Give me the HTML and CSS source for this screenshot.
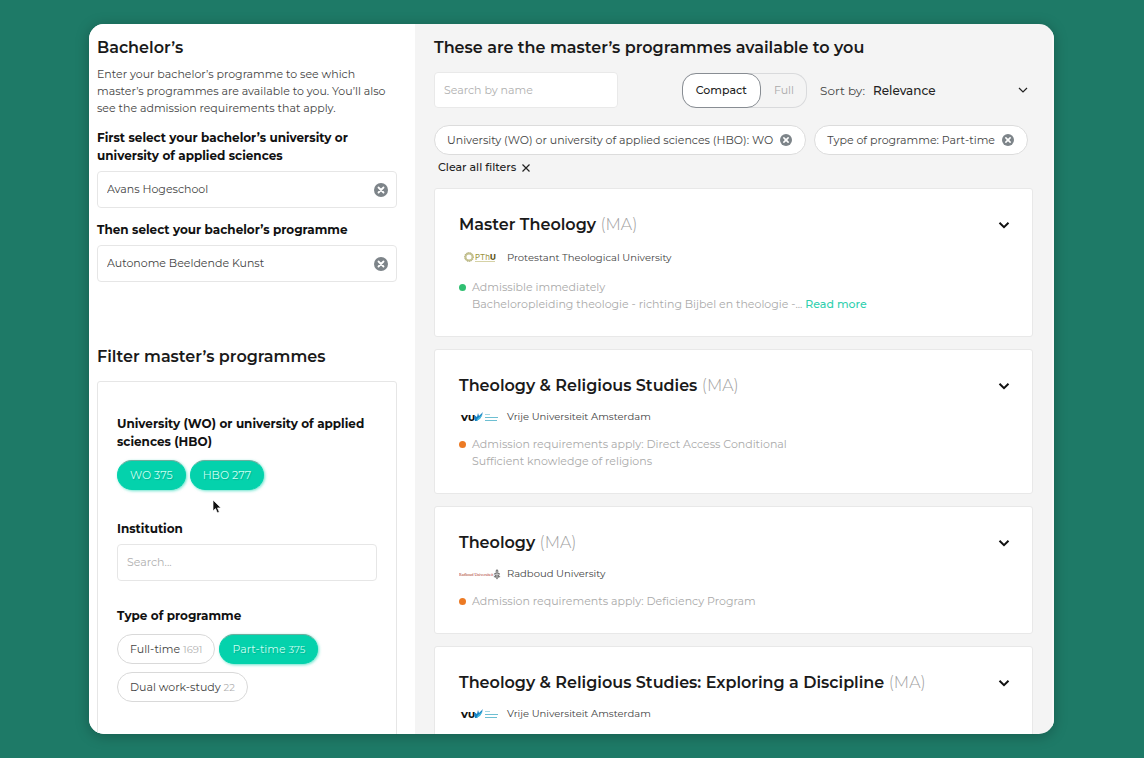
FILE: index.html
```html
<!DOCTYPE html>
<html lang="en">
<head>
    <meta charset="UTF-8">
    <meta name="viewport" content="width=device-width, initial-scale=1.0">
    <title>Master's programmes</title>
    <link rel="stylesheet" href="styles.css">
</head>
<body>
    <!-- Shared icons -->
    <svg class="sprite" width="0" height="0" aria-hidden="true">
        <symbol id="icon-clear" viewBox="0 0 14 14">
            <circle cx="7" cy="7" r="7" fill="#7d8489"/>
            <path d="M4.5 4.5l5 5M9.5 4.5l-5 5" stroke="#fff" stroke-width="1.8" stroke-linecap="round"/>
        </symbol>
        <symbol id="icon-chevron" viewBox="0 0 12 12">
            <path d="M1.5 3.8L6 8.2l4.5-4.4" fill="none" stroke="#111" stroke-width="2"/>
        </symbol>
        <symbol id="logo-vu" viewBox="0 0 42 16">
            <text x="2" y="12" font-family="Montserrat, Inter, sans-serif" font-size="9" font-weight="800" fill="#111">VU</text>
            <path d="M15 6l3 2 1-4 1 3 4-4-2 5-4 4h-2z" fill="#1781c2"/>
            <path d="M19 9l5-4-3 5-4 2z" fill="#41b6dc"/>
            <path d="M26 5.500h5" stroke="#a5d8e4"/>
            <path d="M26 8.500h13M26 11.500h12" stroke="#6dbfd2"/>
        </symbol>
    </svg>

    <div class="app">
        <aside class="sidebar">
            <h2>Bachelor’s</h2>
            <p class="intro">Enter your bachelor’s programme to see which master’s programmes are available to you. You’ll also see the admission requirements that apply.</p>

            <div class="field">
                <label for="university">First select your bachelor’s university or university of applied sciences</label>
                <div class="input-wrap">
                    <input type="text" id="university" value="Avans Hogeschool">
                    <button class="clear-btn" aria-label="Clear university"><svg width="14" height="14"><use href="#icon-clear"/></svg></button>
                </div>
            </div>
            <div class="field">
                <label for="programme">Then select your bachelor’s programme</label>
                <div class="input-wrap">
                    <input type="text" id="programme" value="Autonome Beeldende Kunst">
                    <button class="clear-btn" aria-label="Clear programme"><svg width="14" height="14"><use href="#icon-clear"/></svg></button>
                </div>
            </div>

            <h2 class="filter-title">Filter master’s programmes</h2>
            <div class="filters">
                <div class="filter-group">
                    <h3>University (WO) or university of applied sciences (HBO)</h3>
                    <div class="pills">
                        <button class="pill active">WO 375</button>
                        <button class="pill active">HBO 277</button>
                    </div>
                    <svg class="cursor" width="10" height="15" viewBox="0 0 10 15" aria-hidden="true">
                        <path d="M1 1v11l2.500-2.400 1.800 4.200 2-.9-1.800-4H9z" fill="#111" stroke="#fff" stroke-width=".7"/>
                    </svg>
                </div>
                <div class="filter-group">
                    <label for="institution">Institution</label>
                    <div class="input-wrap">
                        <input type="text" id="institution" placeholder="Search...">
                    </div>
                </div>
                <div class="filter-group">
                    <h3>Type of programme</h3>
                    <div class="pills">
                        <button class="pill">Full-time <span>1691</span></button>
                        <button class="pill active">Part-time <span>375</span></button>
                        <button class="pill">Dual work-study <span>22</span></button>
                    </div>
                </div>
            </div>
        </aside>

        <main class="results">
            <h2>These are the master’s programmes available to you</h2>

            <div class="toolbar">
                <input class="search" type="text" placeholder="Search by name" aria-label="Search by name">
                <div class="toggle">
                    <button class="selected">Compact</button>
                    <button>Full</button>
                </div>
                <div class="sort">
                    <label for="sort">Sort by:</label>
                    <select id="sort">
                        <option>Relevance</option>
                    </select>
                    <svg width="10" height="10" viewBox="0 0 10 10" aria-hidden="true"><path d="M1 3l4 4 4-4" fill="none" stroke="#222" stroke-width="1.2"/></svg>
                </div>
            </div>

            <div class="chips">
                <span class="chip">University (WO) or university of applied sciences (HBO): WO
                    <button aria-label="Remove filter"><svg width="12" height="12"><use href="#icon-clear"/></svg></button>
                </span>
                <span class="chip">Type of programme: Part-time
                    <button aria-label="Remove filter"><svg width="12" height="12"><use href="#icon-clear"/></svg></button>
                </span>
            </div>
            <button class="clear-all">Clear all filters
                <svg width="8" height="8" viewBox="0 0 8 8" aria-hidden="true"><path d="M.5.5l7 7M7.5.5l-7 7" stroke="#222" stroke-width="1.2"/></svg>
            </button>

            <article class="card">
                <div class="card-head">
                    <h3>Master Theology <span>(MA)</span></h3>
                    <button aria-label="Expand"><svg width="12" height="12"><use href="#icon-chevron"/></svg></button>
                </div>
                <div class="school">
                    <svg width="42" height="20" viewBox="0 0 42 20" aria-hidden="true">
                        <circle cx="10" cy="9" r="3.5" fill="none" stroke="#c6c392" stroke-width="2"/>
                        <circle cx="10" cy="9" r="4.5" fill="none" stroke="#8f8c4a" stroke-width=".6" stroke-dasharray="1 1"/>
                        <text x="16" y="12" font-family="Inter, sans-serif" font-size="8" fill="#9a9440">PTh<tspan font-weight="800" fill="#5d5520">U</tspan></text>
                        <path d="M16 13.500h20" stroke="#d6d2a6"/>
                    </svg>
                    Protestant Theological University
                </div>
                <div class="admission green">
                    <p>Admissible immediately</p>
                    <p>Bacheloropleiding theologie - richting Bijbel en theologie -... <a href="#">Read more</a></p>
                </div>
            </article>

            <article class="card">
                <div class="card-head">
                    <h3>Theology &amp; Religious Studies <span>(MA)</span></h3>
                    <button aria-label="Expand"><svg width="12" height="12"><use href="#icon-chevron"/></svg></button>
                </div>
                <div class="school">
                    <svg width="42" height="16" aria-hidden="true"><use href="#logo-vu"/></svg>
                    Vrije Universiteit Amsterdam
                </div>
                <div class="admission">
                    <p>Admission requirements apply: Direct Access Conditional</p>
                    <p>Sufficient knowledge of religions</p>
                </div>
            </article>

            <article class="card">
                <div class="card-head">
                    <h3>Theology <span>(MA)</span></h3>
                    <button aria-label="Expand"><svg width="12" height="12"><use href="#icon-chevron"/></svg></button>
                </div>
                <div class="school">
                    <svg width="42" height="16" viewBox="0 0 42 16" aria-hidden="true">
                        <text x="0" y="10" font-family="Liberation Serif, serif" font-size="4" fill="#a82c1c">Radboud Universiteit</text>
                        <path d="M38 3l1.500 2-.5 1.500 2 1-1 2 1.500 1.500-2 .5-1.500 2-1.500-2-2-.5 1.500-1.500-1-2 2-1-.5-1.500z" fill="#777"/>
                        <path d="M38 5v7M36 8.500h4" stroke="#ddd" stroke-width=".7"/>
                    </svg>
                    Radboud University
                </div>
                <div class="admission">
                    <p>Admission requirements apply: Deficiency Program</p>
                </div>
            </article>

            <article class="card">
                <div class="card-head">
                    <h3>Theology &amp; Religious Studies: Exploring a Discipline <span>(MA)</span></h3>
                    <button aria-label="Expand"><svg width="12" height="12"><use href="#icon-chevron"/></svg></button>
                </div>
                <div class="school">
                    <svg width="42" height="16" aria-hidden="true"><use href="#logo-vu"/></svg>
                    Vrije Universiteit Amsterdam
                </div>
            </article>
        </main>
    </div>
</body>
</html>
```
FILE: styles.css
```css
* {
    box-sizing: border-box;
}

body {
    margin: 0;
    padding: 24px 90px 24px 89px;
    height: 100vh;
    overflow: hidden;
    background: #1e7a67;
    color: #444;
    font-family: Montserrat, Inter, sans-serif;
    font-size: 11px;
    line-height: 17px;
}

h2, h3, p {
    margin: 0;
}

h2 {
    color: #1a1a1a;
    font-size: 16px;
    font-weight: 600;
    line-height: 24px;
}

button, input, select {
    font: inherit;
    color: inherit;
}

button {
    padding: 0;
    border: none;
    background: none;
    cursor: pointer;
}

button svg {
    display: block;
}

.sprite {
    display: none;
}

.app {
    display: grid;
    grid-template-columns: 326px 1fr;
    height: 100%;
    overflow: hidden;
    border-radius: 15px;
    background: #f4f4f4;
    box-shadow: 0 2px 14px rgba(0, 0, 0, 0.25);
}

/* Sidebar */
.sidebar {
    padding: 12px 18px 0 8px;
    background: #fff;
}

.intro {
    margin: 6px 0 12px;
}

.field {
    margin-bottom: 13px;
}

.field label, .filter-group label, .filter-group h3 {
    display: block;
    margin-bottom: 6px;
    color: #111;
    font-size: 12px;
    font-weight: 700;
    line-height: 18px;
}

.input-wrap {
    display: flex;
    align-items: center;
    height: 37px;
    padding: 0 8px 0 9px;
    border: 1px solid #e6e6e6;
    border-radius: 4px;
    background: #fff;
}

.input-wrap input {
    flex: 1;
    min-width: 0;
    padding: 0;
    border: none;
    outline: none;
    background: none;
}

input::placeholder {
    color: #b0b0b0;
    opacity: 1;
}

.filter-title {
    margin: 63px 0 12px;
}

.filters {
    height: 500px;
    padding: 33px 19px 0;
    border: 1px solid #e6e6e6;
    border-radius: 3px;
}

.filter-group {
    position: relative;
    margin-bottom: 26px;
}

.pills {
    display: flex;
    flex-wrap: wrap;
    gap: 8px 4px;
    padding: 3px 0 4px;
}

.pill {
    height: 30px;
    padding: 0 12px;
    border: 1px solid #d9d9d9;
    border-radius: 15px;
    background: #fff;
}

.pill span {
    color: #b0b0b0;
    font-size: 10px;
}

.pill.active {
    border-color: #04d2ac;
    border-top-color: #6fae9f;
    background: #04d2ac;
    box-shadow: 1px 1px 3px rgba(4, 210, 172, 0.6);
    color: #c8fff2;
    text-shadow: 1px 1px 1px rgba(0, 0, 0, 0.15);
}

.pill.active span {
    color: #c8fff2;
}

/* Mouse pointer under the pills */
.cursor {
    position: absolute;
    top: 84px;
    left: 95px;
}

/* Results */
.results {
    min-width: 0;
    padding: 12px 19px 0;
    border-right: 2px solid #f9f9f9;
}

.toolbar {
    display: flex;
    align-items: center;
    margin: 12px 0 17px;
}

.search {
    width: 184px;
    height: 36px;
    padding: 0 9px;
    border: 1px solid #e9e9e9;
    border-radius: 4px;
    background: #fff;
}

.toggle {
    display: flex;
    margin-left: auto;
    height: 35px;
    border-radius: 14px;
    box-shadow: inset 0 0 0 1px #d9dadc;
    color: #aaa;
}

.toggle button {
    padding: 0 13px;
}

.toggle .selected {
    border: 1px solid #888d93;
    border-radius: 14px;
    background: #fff;
    color: #222;
    font-weight: 500;
}

.sort {
    display: flex;
    align-items: center;
    gap: 8px;
    width: 213px;
    margin-left: 13px;
    padding-right: 5px;
    font-size: 12px;
}

.sort select {
    flex: 1;
    padding: 0;
    border: none;
    outline: none;
    background: none;
    appearance: none;
    color: #222;
    font-weight: 500;
}

.chips {
    display: flex;
    flex-wrap: wrap;
    gap: 8px;
}

.chip {
    display: flex;
    align-items: center;
    gap: 7px;
    height: 30px;
    padding: 0 13px 0 12px;
    border: 1px solid #dcdcdc;
    border-radius: 15px;
    background: #fff;
}

.clear-all {
    display: flex;
    align-items: center;
    gap: 6px;
    margin: 4px 4px 12px;
    color: #222;
    font-weight: 500;
}

.card {
    margin-bottom: 12px;
    padding: 24px 22px 23px 24px;
    border: 1px solid #e8e8e8;
    border-radius: 3px;
    background: #fff;
}

.card-head {
    display: flex;
    align-items: center;
    justify-content: space-between;
}

.card-head h3 {
    color: #1a1a1a;
    font-size: 16px;
    font-weight: 600;
    line-height: 24px;
}

.card-head h3 span {
    color: #a0a0a0;
    font-weight: 300;
}

.school {
    display: flex;
    align-items: center;
    gap: 6px;
    margin: 11px 0;
    font-size: 10px;
    line-height: 16px;
}

.admission {
    position: relative;
    padding-left: 13px;
    color: #aaa;
}

/* Status dot */
.admission::before {
    content: "";
    position: absolute;
    top: 5px;
    left: 0;
    width: 7px;
    height: 7px;
    border-radius: 50%;
    background: #ec7a24;
}

.admission.green::before {
    background: #2fbf71;
}

.admission a {
    color: #2fd0ae;
    font-weight: 500;
    text-decoration: none;
}
```
